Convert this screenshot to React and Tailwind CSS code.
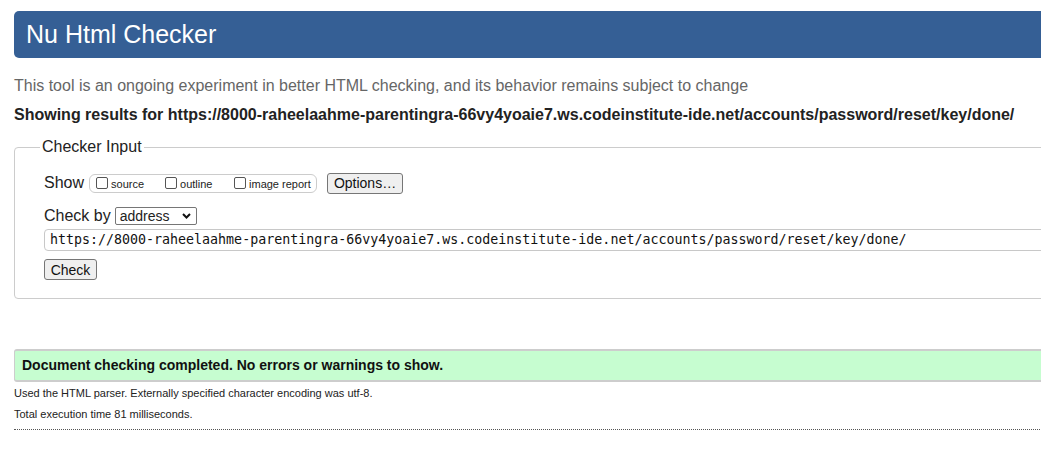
export default function App() {
  const url = 'https://8000-raheelaahme-parentingra-66vy4yoaie7.ws.codeinstitute-ide.net/accounts/password/reset/key/done/';
  return (
    <div className="w-full h-[454px] overflow-hidden bg-white text-[#222] font-['Liberation_Sans',Arial,sans-serif]">
      <div className="w-[1100px] pl-[14px] pt-[11px]">
        <h1 className="h-[47px] flex items-center pl-[12px] bg-[#355f95] text-white text-[25px] rounded-l-[5px] leading-none">
          Nu Html Checker
        </h1>

        <p className="mt-[18px] text-[16px] leading-[20px] text-[#666]">
          This tool is an ongoing experiment in better HTML checking, and its behavior remains subject to change
        </p>
        <p className="mt-[9px] text-[16px] leading-[20px] font-bold text-[#222]">
          Showing results for {url}
        </p>

        <fieldset className="mt-[12px] h-[162px] border border-[#ccc] rounded-[4px] pl-[29px] pr-0">
          <legend className="px-[2px] ml-[-4px] text-[16px] leading-[20px] text-[#222]">Checker Input</legend>

          <div className="mt-[15px] flex items-center h-[22px]">
            <span className="text-[16px] mr-[5px]">Show</span>
            <div className="h-[19px] w-[228px] border border-[#ccc] rounded-[6px] flex items-center pl-[6px] text-[11px]">
              <Box />
              <span className="ml-[3px] mt-[2px] w-[54px]">source</span>
              <Box />
              <span className="ml-[3px] mt-[2px] w-[54px]">outline</span>
              <Box />
              <span className="ml-[3px] mt-[2px]">image report</span>
            </div>
            <button className="ml-[10px] h-[21px] w-[76px] border border-[#767676] rounded-[3px] bg-[#efefef] text-[14px] text-[#111] leading-none">
              Options…
            </button>
          </div>

          <div className="mt-[12px] flex items-center h-[20px]">
            <span className="text-[16px] mr-[4px]">Check by</span>
            <div className="h-[18px] w-[82px] border border-[#767676] rounded-[2px] flex items-center justify-between pl-[4px] pr-[5px] text-[14px]">
              <span>address</span>
              <svg width="9" height="6" viewBox="0 0 9 6" fill="none" stroke="#111" strokeWidth="2">
                <path d="M1 1l3.5 3.5L8 1" />
              </svg>
            </div>
          </div>

          <div className="mt-[3px] h-[22px] border border-[#c8c8c8] rounded-l-[4px] flex items-center pl-[5px] text-[13.3px] font-['DejaVu_Sans_Mono',Menlo,monospace] text-[#111]">
            {url}
          </div>

          <button className="mt-[8px] h-[21px] w-[53px] border border-[#767676] rounded-[3px] bg-[#efefef] text-[14px] text-[#111] leading-none">
            Check
          </button>
        </fieldset>

        <div className="mt-[50px] h-[33px] bg-[#c6fdd0] border-y-2 border-l border-[#cdcdcd] rounded-l-[3px] flex items-center pl-[7px] text-[14px] font-bold text-[#111]">
          Document checking completed. No errors or warnings to show.
        </div>

        <p className="mt-[4px] text-[11px] leading-[14px] text-[#222]">
          Used the HTML parser. Externally specified character encoding was utf-8.
        </p>
        <p className="mt-[7px] text-[11px] leading-[14px] text-[#222]">
          Total execution time 81 milliseconds.
        </p>
        <div className="mt-[8px] border-t border-dotted border-[#555]" />
      </div>
    </div>
  );
}

function Box() {
  return <span className="inline-block w-[12px] h-[12px] border border-[#555] rounded-[2px] bg-white" />;
}
